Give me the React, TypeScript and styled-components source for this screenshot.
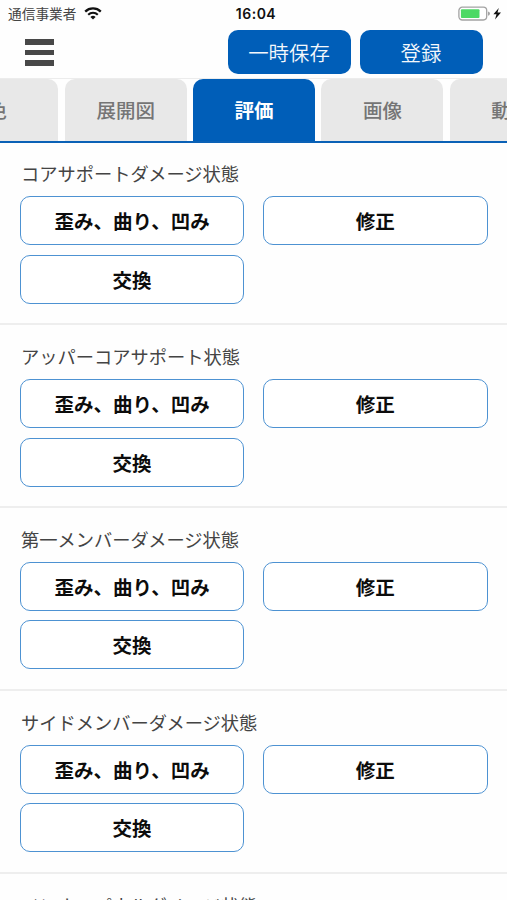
import React from "react";
import styled, { createGlobalStyle } from "styled-components";

const GlobalStyle = createGlobalStyle`
  * { box-sizing: border-box; }
  body {
    margin: 0;
    background: #fff;
    font-family: "Noto Sans CJK JP", sans-serif;
  }
`;

const Screen = styled.div`
  width: 507px;
  height: 900px;
  overflow: hidden;
  background: #fefefe;
`;

const StatusBar = styled.div`
  display: grid;
  grid-template-columns: 1fr auto 1fr;
  align-items: center;
  height: 27px;
  padding: 0 5px 0 8px;
`;

const Carrier = styled.div`
  display: flex;
  align-items: center;
  gap: 8px;
  font-size: 13.7px;
  line-height: 27px;
  color: #444;
`;

const Clock = styled.div`
  font: 600 14px/27px Inter, sans-serif;
  letter-spacing: 0.5px;
  color: #111;
  padding-left: 2px;
`;

const Power = styled.div`
  display: flex;
  justify-content: flex-end;
  align-items: center;
`;

const Header = styled.header`
  display: flex;
  align-items: flex-start;
  height: 51px;
  padding: 3px 24.5px 0 25px;
  gap: 9px;
`;

const MenuButton = styled.button`
  display: flex;
  flex-direction: column;
  gap: 5px;
  width: 29px;
  margin: 9px auto 0 0;
  padding: 0;
  border: 0;
  background: none;
`;

const MenuBar = styled.span`
  width: 29px;
  height: 5.6px;
  background: #484848;
`;

const ActionButton = styled.button`
  width: 123px;
  height: 44px;
  padding: 0;
  border: 0;
  border-radius: 10px;
  background: #005eb8;
  color: #f4f8fc;
  font: 350 20.4px/42px "Noto Sans CJK JP", sans-serif;
`;

const TabStrip = styled.nav`
  display: flex;
  gap: 6.3px;
  height: 64.6px;
  overflow: hidden;
  border-top: 1px solid #ececec;
  border-bottom: 2px solid #0a61b6;
`;

const Tab = styled.button<{ $active?: boolean }>`
  flex: 0 0 122.1px;
  height: 62px;
  padding: 0;
  border: 0;
  border-radius: 10px 10px 0 0;
  background: ${(p) => (p.$active ? "#005eb8" : "#e8e8e8")};
  color: ${(p) => (p.$active ? "#fff" : "#757575")};
  font: ${(p) => (p.$active ? 700 : 500)} 19.5px/62px "Noto Sans CJK JP", sans-serif;

  &:first-child {
    margin-left: -63.8px;
  }
`;

const Section = styled.section`
  height: 182.85px;
  padding: 17.6px 19.5px 0 20px;
  border-bottom: 2px solid #eeeeee;
`;

const Label = styled.h2`
  margin: 0 0 8.8px;
  padding-left: 1px;
  font-size: 18.25px;
  font-weight: 400;
  line-height: 27px;
  color: #444;
  white-space: nowrap;
`;

const Options = styled.div`
  display: grid;
  grid-template-columns: 1fr 1fr;
  gap: 9.8px 19px;
`;

const Option = styled.button`
  height: 49px;
  padding: 1px 0 0;
  border: 1.5px solid #4d92d2;
  border-radius: 10px;
  background: #fff;
  color: #0c0c0c;
  font: 700 19.5px/46px "Noto Sans CJK JP", sans-serif;
`;

const tabs = ["色", "展開図", "評価", "画像", "動画"];
const sections = [
  "コアサポートダメージ状態",
  "アッパーコアサポート状態",
  "第一メンバーダメージ状態",
  "サイドメンバーダメージ状態",
  "インナーパネルダメージ状態",
];
const options = ["歪み、曲り、凹み", "修正", "交換"];

function WifiIcon() {
  return (
    <svg width="18" height="13" viewBox="0 0 18 13" fill="none">
      <path d="M1.2 4.6a11.2 11.2 0 0 1 15.6 0" stroke="#111" strokeWidth="2.3" />
      <path d="M4.2 7.7a6.9 6.9 0 0 1 9.6 0" stroke="#111" strokeWidth="2.1" />
      <path d="M6.4 9.9a3.8 3.8 0 0 1 5.2 0L9 12.6Z" fill="#111" />
    </svg>
  );
}

function BatteryIcon() {
  return (
    <svg width="44" height="16" viewBox="0 0 44 16">
      <rect x="0.9" y="1.2" width="27.8" height="12.8" rx="3.4" fill="#fff" stroke="#a3a3a3" strokeWidth="1.3" />
      <rect x="2.9" y="3.3" width="18.6" height="8.6" rx="1" fill="#4cd964" />
      <path d="M30 5.4q2 .5 2 2.2t-2 2.2Z" fill="#a3a3a3" />
      <path d="M40.8 2 35.4 8.3h3.1L37 13.6 43 6.5H39.5Z" fill="#111" />
    </svg>
  );
}

export default function App() {
  return (
    <Screen>
      <GlobalStyle />
      <StatusBar>
        <Carrier>
          通信事業者
          <WifiIcon />
        </Carrier>
        <Clock>16:04</Clock>
        <Power>
          <BatteryIcon />
        </Power>
      </StatusBar>
      <Header>
        <MenuButton aria-label="メニュー">
          <MenuBar />
          <MenuBar />
          <MenuBar />
        </MenuButton>
        <ActionButton>一時保存</ActionButton>
        <ActionButton>登録</ActionButton>
      </Header>
      <TabStrip>
        {tabs.map((name) => (
          <Tab key={name} $active={name === "評価"}>
            {name}
          </Tab>
        ))}
      </TabStrip>
      <main>
        {sections.map((title) => (
          <Section key={title}>
            <Label>{title}</Label>
            <Options>
              {options.map((option) => (
                <Option key={option}>{option}</Option>
              ))}
            </Options>
          </Section>
        ))}
      </main>
    </Screen>
  );
}
